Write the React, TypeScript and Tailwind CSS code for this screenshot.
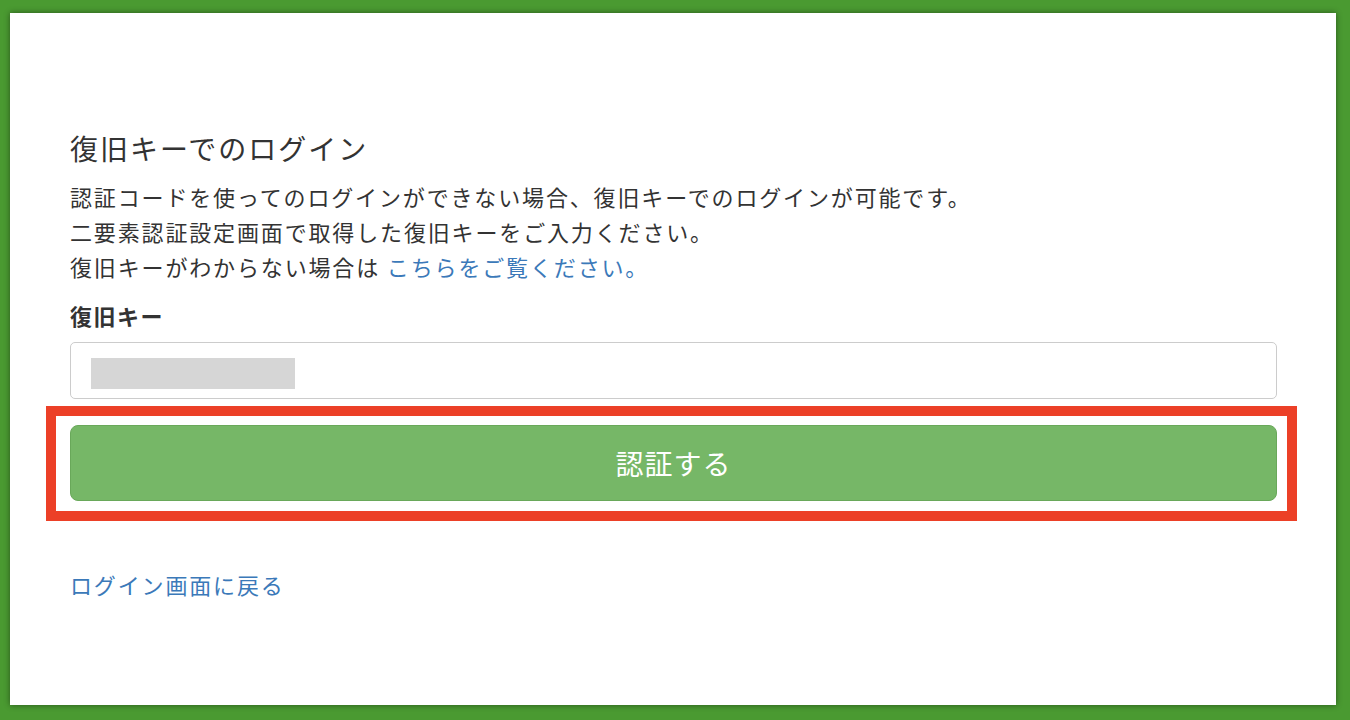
export default function App() {
  return (
    <div className="h-[720px] overflow-hidden bg-[#4a9a31] pt-[13px] pl-[10px] pr-[14px] pb-[15px] font-['Noto_Sans_CJK_JP','Noto_Sans',sans-serif]">
      <div className="h-[692px] bg-white pl-[60px] pr-[59px] pt-[118px] shadow-[0_0_6px_rgba(0,0,0,0.45)]">
        <h1 className="text-[28px] leading-[34px] tracking-[2px] text-[#333] font-normal">
          復旧キーでのログイン
        </h1>
        <p className="mt-[14px] text-[22px] leading-[35px] tracking-[1.85px] text-[#333]">
          認証コードを使ってのログインができない場合、復旧キーでのログインが可能です。
          <br />
          二要素認証設定画面で取得した復旧キーをご入力ください。
          <br />
          復旧キーがわからない場合は{' '}
          <a href="#" className="text-[#3b79b9]">
            こちらをご覧ください。
          </a>
        </p>

        <label className="block mt-[16px] text-[22px] leading-[30px] tracking-[1.5px] font-bold text-[#333]">
          復旧キー
        </label>
        <div className="mt-[12px] h-[57px] rounded-[5px] border border-[#cccccc] pl-[20px] pt-[15px]">
          <div className="h-[31px] w-[204px] bg-[#d6d6d6]" />
        </div>

        <div className="mt-[7px] -ml-[24px] -mr-[20px] border-[10px] border-[#ec4027] pl-[14px] pr-[10px] pt-[9px] pb-[10px]">
          <button
            type="button"
            className="flex h-[76px] w-full items-center justify-center rounded-[8px] border border-[#69a85a] bg-[#76b767] text-[28px] tracking-[1px] text-white"
          >
            認証する
          </button>
        </div>

        <a href="#" className="mt-[48px] block text-[22px] leading-[30px] tracking-[1.85px] text-[#3b79b9]">
          ログイン画面に戻る
        </a>
      </div>
    </div>
  );
}
